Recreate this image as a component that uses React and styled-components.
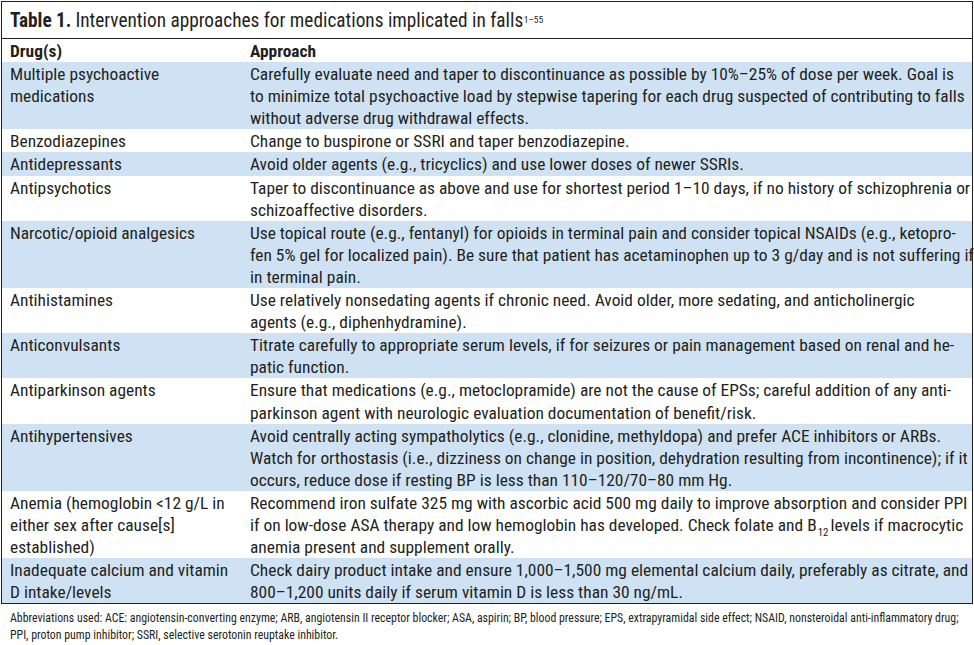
import React from "react";
import styled, { createGlobalStyle } from "styled-components";

const Global = createGlobalStyle`
  html, body { margin: 0; padding: 0; background: #ffffff; }
  body { font-family: "Roboto Condensed", "Liberation Sans", sans-serif; color: #231f20; }
`;

const Page = styled.div`
  width: 974px;
  height: 645px;
  padding: 1px 0 0 1px;
  box-sizing: border-box;
  background: #fff;
`;

const Table = styled.section`
  width: 972px;
  box-sizing: border-box;
  border: 1px solid #231f20;
  display: flex;
  flex-direction: column;
`;

const TitleBar = styled.div`
  height: 36px;
  display: flex;
  align-items: center;
  padding: 0 8px;
  border-bottom: 1px solid #231f20;
  font-size: 19.3px;
  white-space: nowrap;
`;

const TitleLabel = styled.b`
  font-weight: 700;
  margin-right: 4px;
`;

const Sup = styled.sup`
  font-size: 9.5px;
  vertical-align: 8px;
  line-height: 0;
  margin-left: 0.5px;
`;

const Row = styled.div`
  display: grid;
  grid-template-columns: 240px 1fr;
  padding-top: 1px;
  background: ${(p) => (p.$shade ? "#cfe2f3" : "#ffffff")};
  font-size: 17.4px;
  line-height: 22.1px;
  font-weight: ${(p) => (p.$head ? 700 : 400)};
`;

const Cell = styled.div`
  padding: 0 8px;
  white-space: nowrap;
`;

const Line = styled.div``;

const Sub = styled.sub`
  font-size: 11px;
  vertical-align: -5px;
  line-height: 0;
  margin: 0 2px 0 1px;
`;

const Footnote = styled.p`
  margin: 0;
  padding: 6px 0 0 9px;
  font-size: 11.85px;
  line-height: 17px;
  white-space: nowrap;
`;

const rows = [
  {
    drug: ["Multiple psychoactive", "medications"],
    approach: [
      "Carefully evaluate need and taper to discontinuance as possible by 10%–25% of dose per week. Goal is",
      "to minimize total psychoactive load by stepwise tapering for each drug suspected of contributing to falls",
      "without adverse drug withdrawal effects.",
    ],
  },
  {
    drug: ["Benzodiazepines"],
    approach: ["Change to buspirone or SSRI and taper benzodiazepine."],
  },
  {
    drug: ["Antidepressants"],
    approach: ["Avoid older agents (e.g., tricyclics) and use lower doses of newer SSRIs."],
  },
  {
    drug: ["Antipsychotics"],
    approach: [
      "Taper to discontinuance as above and use for shortest period 1–10 days, if no history of schizophrenia or",
      "schizoaffective disorders.",
    ],
  },
  {
    drug: ["Narcotic/opioid analgesics"],
    approach: [
      "Use topical route (e.g., fentanyl) for opioids in terminal pain and consider topical NSAIDs (e.g., ketopro-",
      "fen 5% gel for localized pain). Be sure that patient has acetaminophen up to 3 g/day and is not suffering if",
      "in terminal pain.",
    ],
  },
  {
    drug: ["Antihistamines"],
    approach: [
      "Use relatively nonsedating agents if chronic need. Avoid older, more sedating, and anticholinergic",
      "agents (e.g., diphenhydramine).",
    ],
  },
  {
    drug: ["Anticonvulsants"],
    approach: [
      "Titrate carefully to appropriate serum levels, if for seizures or pain management based on renal and he-",
      "patic function.",
    ],
  },
  {
    drug: ["Antiparkinson agents"],
    approach: [
      "Ensure that medications (e.g., metoclopramide) are not the cause of EPSs; careful addition of any anti-",
      "parkinson agent with neurologic evaluation documentation of benefit/risk.",
    ],
  },
  {
    drug: ["Antihypertensives"],
    approach: [
      "Avoid centrally acting sympatholytics (e.g., clonidine, methyldopa) and prefer ACE inhibitors or ARBs.",
      "Watch for orthostasis (i.e., dizziness on change in position, dehydration resulting from incontinence); if it",
      "occurs, reduce dose if resting BP is less than 110–120/70–80 mm Hg.",
    ],
  },
  {
    drug: ["Anemia (hemoglobin <12 g/L in", "either sex after cause[s]", "established)"],
    approach: [
      "Recommend iron sulfate 325 mg with ascorbic acid 500 mg daily to improve absorption and consider PPI",
      <>
        if on low-dose ASA therapy and low hemoglobin has developed. Check folate and B<Sub>12</Sub>levels if macrocytic
      </>,
      "anemia present and supplement orally.",
    ],
  },
  {
    drug: ["Inadequate calcium and vitamin", "D intake/levels"],
    approach: [
      "Check dairy product intake and ensure 1,000–1,500 mg elemental calcium daily, preferably as citrate, and",
      "800–1,200 units daily if serum vitamin D is less than 30 ng/mL.",
    ],
  },
];

export default function App() {
  return (
    <Page>
      <Global />
      <Table>
        <TitleBar>
          <TitleLabel>Table 1.</TitleLabel>
          Intervention approaches for medications implicated in falls
          <Sup>1–55</Sup>
        </TitleBar>
        <Row $head>
          <Cell>Drug(s)</Cell>
          <Cell>Approach</Cell>
        </Row>
        {rows.map((r, i) => (
          <Row key={i} $shade={i % 2 === 0}>
            <Cell>
              {r.drug.map((l, j) => (
                <Line key={j}>{l}</Line>
              ))}
            </Cell>
            <Cell>
              {r.approach.map((l, j) => (
                <Line key={j}>{l}</Line>
              ))}
            </Cell>
          </Row>
        ))}
      </Table>
      <Footnote>
        Abbreviations used: ACE: angiotensin-converting enzyme; ARB, angiotensin II receptor blocker; ASA, aspirin; BP,
        blood pressure; EPS, extrapyramidal side effect; NSAID, nonsteroidal anti-inflammatory drug;
        <br />
        PPI, proton pump inhibitor; SSRI, selective serotonin reuptake inhibitor.
      </Footnote>
    </Page>
  );
}
